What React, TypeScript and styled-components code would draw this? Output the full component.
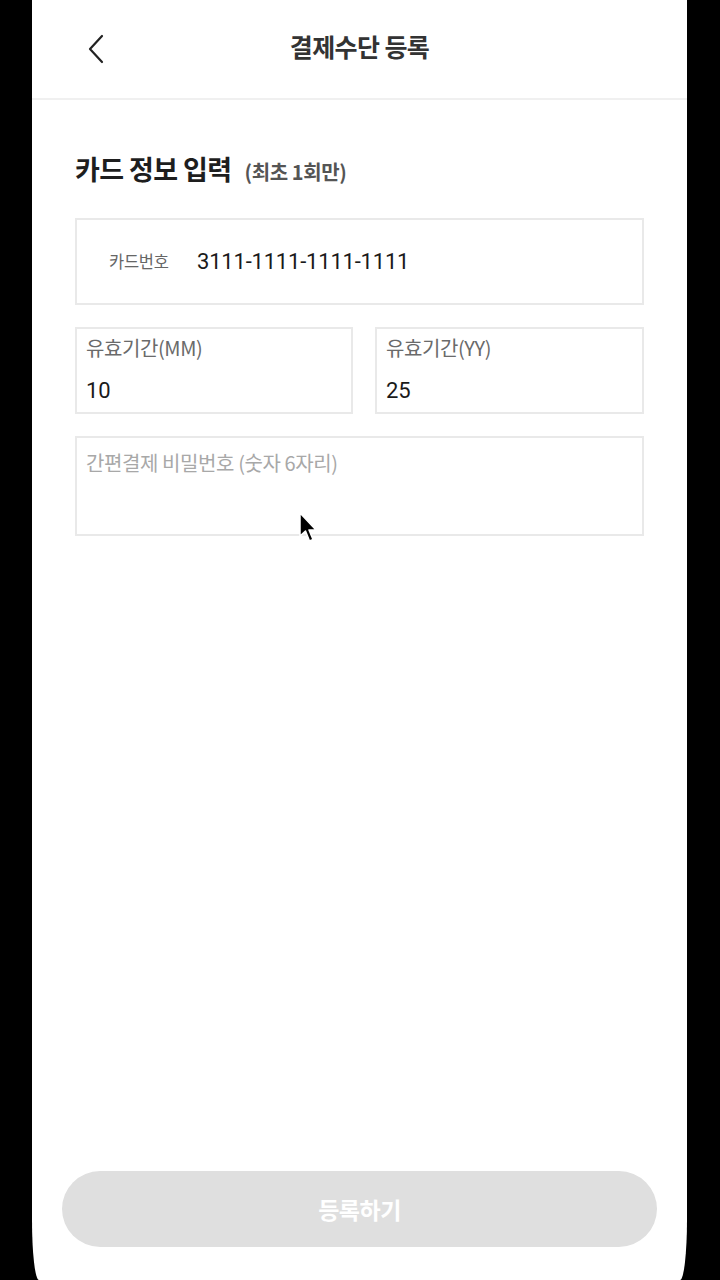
import React from "react";
import styled, { createGlobalStyle } from "styled-components";

const Global = createGlobalStyle`
  html, body { margin: 0; padding: 0; background: #000; }
  body { font-family: "Noto Sans CJK KR", "Noto Sans", sans-serif; overflow: hidden; }
  * { box-sizing: border-box; }
`;

const Screen = styled.div`
  position: relative;
  margin-left: 32px;
  width: 655px;
  height: 1280px;
  background: #fff;
  border-radius: 0 0 7px 7px / 0 0 60px 60px;
  display: flex;
  flex-direction: column;
`;

const Header = styled.header`
  position: relative;
  height: 100px;
  border-bottom: 2px solid #f0f0f0;
  display: flex;
  align-items: center;
  justify-content: center;
`;

const BackButton = styled.button`
  position: absolute;
  left: 50px;
  top: 33px;
  width: 28px;
  height: 32px;
  padding: 0;
  border: 0;
  background: none;
  display: flex;
  align-items: center;
  justify-content: center;
`;

const Title = styled.h1`
  margin: 0 0 6px;
  font-size: 25px;
  font-weight: 700;
  color: #333;
  letter-spacing: -0.6px;
`;

const Content = styled.main`
  flex: 1;
  padding: 49px 43px 0;
  display: flex;
  flex-direction: column;
`;

const SectionTitle = styled.h2`
  margin: 0 0 26px;
  display: flex;
  align-items: baseline;
  gap: 13px;
  font-size: 27px;
  font-weight: 700;
  color: #1e1e1e;
  letter-spacing: -0.6px;
  line-height: 40px;
`;

const SectionNote = styled.span`
  font-size: 20px;
  font-weight: 700;
  color: #555;
  letter-spacing: -0.4px;
`;

const Fields = styled.div`
  display: flex;
  flex-direction: column;
  gap: 22px;
`;

const Box = styled.div<{ $h: number; $row?: boolean }>`
  height: ${(p) => p.$h}px;
  border: 2px solid #e9e9e9;
  display: flex;
  flex-direction: ${(p) => (p.$row ? "row" : "column")};
  align-items: ${(p) => (p.$row ? "center" : "flex-start")};
  padding: ${(p) => (p.$row ? "0 0 0 32px" : "6px 9px 0")};
`;

const InlineLabel = styled.span`
  font-size: 16.5px;
  color: #666;
  width: 88px;
  margin-bottom: 2px;
  letter-spacing: -0.3px;
`;

const Value = styled.span`
  font-family: "Roboto", "Noto Sans CJK KR", sans-serif;
  font-size: 22px;
  color: #1a1a1a;
  letter-spacing: -0.2px;
`;

const StackLabel = styled.span`
  font-family: "Noto Sans CJK KR", sans-serif;
  font-size: 20px;
  color: #6a6a6a;
  letter-spacing: -0.4px;
  line-height: 26px;
`;

const StackValue = styled(Value)`
  margin-top: 17px;
  line-height: 26px;
`;

const Placeholder = styled.span`
  font-size: 20px;
  color: #a8a8a8;
  letter-spacing: -0.4px;
  line-height: 26px;
  margin-top: 6px;
`;

const Row = styled.div`
  display: grid;
  grid-template-columns: 278fr 269fr;
  gap: 22px;
`;

const Footer = styled.div`
  padding: 0 30px 33px;
`;

const SubmitButton = styled.button`
  width: 100%;
  height: 76px;
  border: 0;
  border-radius: 38px;
  background: #dfdfdf;
  color: #fff;
  font-family: "Noto Sans CJK KR", sans-serif;
  font-size: 23px;
  font-weight: 700;
  letter-spacing: -0.5px;
`;

const Cursor = styled.svg`
  position: absolute;
  left: 266px;
  top: 512px;
`;

export default function App() {
  return (
    <>
      <Global />
      <Screen>
        <Header>
          <BackButton aria-label="back">
            <svg width="18" height="30" viewBox="0 0 18 30">
              <polyline points="15,2 3,15 15,28" fill="none" stroke="#222" strokeWidth="2.2" strokeLinecap="round" strokeLinejoin="round" />
            </svg>
          </BackButton>
          <Title>결제수단 등록</Title>
        </Header>
        <Content>
          <SectionTitle>
            카드 정보 입력 <SectionNote>(최초 1회만)</SectionNote>
          </SectionTitle>
          <Fields>
            <Box $h={87} $row>
              <InlineLabel>카드번호</InlineLabel>
              <Value>3111-1111-1111-1111</Value>
            </Box>
            <Row>
              <Box $h={87}>
                <StackLabel>유효기간(MM)</StackLabel>
                <StackValue>10</StackValue>
              </Box>
              <Box $h={87}>
                <StackLabel>유효기간(YY)</StackLabel>
                <StackValue>25</StackValue>
              </Box>
            </Row>
            <Box $h={100}>
              <Placeholder>간편결제 비밀번호 (숫자 6자리)</Placeholder>
            </Box>
          </Fields>
        </Content>
        <Footer>
          <SubmitButton>등록하기</SubmitButton>
        </Footer>
        <Cursor width="20" height="34" viewBox="0 0 20 34">
          <path d="M2 1 L2 24 L7.5 19 L11.5 29 L15 27.5 L11 18 L18 18 Z" fill="#000" stroke="#fff" strokeWidth="1.5" strokeLinejoin="round" />
        </Cursor>
      </Screen>
    </>
  );
}
